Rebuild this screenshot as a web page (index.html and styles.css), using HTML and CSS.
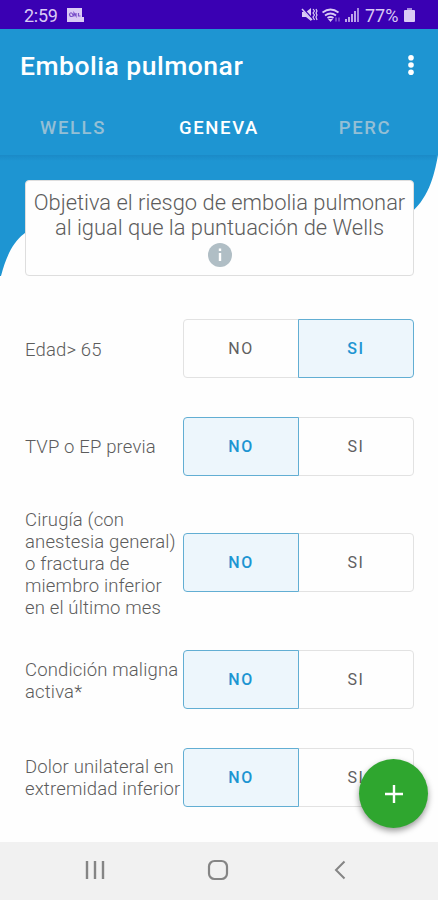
FILE: index.html
```html
<!DOCTYPE html>
<html lang="es">
<head>
    <meta charset="UTF-8">
    <meta name="viewport" content="width=device-width, initial-scale=1.0">
    <title>Embolia pulmonar</title>
    <link rel="stylesheet" href="styles.css">
</head>
<body>
    <div class="status-bar">
        <span class="clock">2:59</span>
        <svg class="notification" width="19" height="15" viewBox="0 0 19 15">
            <path d="M1 0h15v9h2v5H1z" fill="#dacbf5"/>
            <path d="M3.500 6q1.500-2.500 3 0t-1 2.500q-2 0-2-2.500M8 8.500V5l2 3V5M12.500 5v3h2" fill="none" stroke="#7a50c8" stroke-width="1.200"/>
        </svg>
        <div class="status-icons">
            <svg width="17" height="16" viewBox="0 0 17 16">
                <path d="M1 5h4l5-4v13l-5-4H1z" fill="#dacbf5"/>
                <path d="M1 1l12 13" stroke="#3a00b3" stroke-width="2.500"/>
                <path d="M1 2l10 11" stroke="#dacbf5" stroke-width="1.500"/>
                <path d="M12 2l1.500 2-1.500 2 1.500 2-1.500 2 1.500 3M15 2l1 2-1 2 1 2-1 2 1 3" fill="none" stroke="#dacbf5" stroke-width="1.200"/>
            </svg>
            <svg width="19" height="15" viewBox="0 0 19 15">
                <path d="M.5 4.500q8-6 16 0M3 7.500q5.500-4 11 0M5.500 10q3-2 6 0" fill="none" stroke="#dacbf5" stroke-width="1.800"/>
                <path d="M6 11h5l-2.500 3z" fill="#dacbf5"/>
                <path d="M14 13.500v-4M17 9.500v4" stroke="#9470d8" stroke-width="1.200"/>
            </svg>
            <svg width="14" height="14" viewBox="0 0 14 14">
                <path d="M0 11h2v3H0zM3 9h2v5H3zM6 6h2v8H6zM9 3h2v11H9z" fill="#bda6e9"/>
                <path d="M12 0h2v14h-2z" fill="#a588e0"/>
            </svg>
            <span class="battery-text">77%</span>
            <svg width="11" height="14" viewBox="0 0 11 14">
                <path d="M3 0h5v2H3z" fill="#a588e0"/>
                <path d="M1 2h9q1 0 1 1v10q0 1-1 1H1q-1 0-1-1V3q0-1 1-1z" fill="#dacbf5"/>
            </svg>
        </div>
    </div>

    <header class="app-bar">
        <div class="title-row">
            <h1>Embolia pulmonar</h1>
            <svg width="6" height="22" viewBox="0 0 6 22" fill="#fff">
                <circle cx="3" cy="3.700" r="2.800"/>
                <circle cx="3" cy="11" r="2.800"/>
                <circle cx="3" cy="18.300" r="2.800"/>
            </svg>
        </div>
        <nav class="tabs">
            <a class="tab">WELLS</a>
            <a class="tab active">GENEVA</a>
            <a class="tab">PERC</a>
        </nav>
    </header>

    <main class="content">
        <svg class="wave" width="438" height="122" viewBox="0 0 438 122">
            <path d="M0 0H438C434 22 428 45 408 60Q400 66 390 67H52C20 73 9 91 1 121H0z" fill="#1e95d2"/>
        </svg>
        <section class="info-card">
            <p>Objetiva el riesgo de embolia pulmonar<br>al igual que la puntuación de Wells</p>
            <svg width="26" height="26" viewBox="0 0 26 26">
                <circle cx="13" cy="13" r="12" fill="#b0bec5"/>
                <path d="M11.800 6.500h2.400v2.500h-2.400zM11.800 11h2.400v8h-2.400z" fill="#fff"/>
            </svg>
        </section>

        <div class="question">
            <p>Edad&gt; 65</p>
            <div class="toggle"><button>NO</button><button class="selected">SI</button></div>
        </div>
        <div class="question">
            <p>TVP o EP previa</p>
            <div class="toggle"><button class="selected">NO</button><button>SI</button></div>
        </div>
        <div class="question tall">
            <p>Cirugía (con<br>anestesia general)<br>o fractura de<br>miembro inferior<br>en el último mes</p>
            <div class="toggle"><button class="selected">NO</button><button>SI</button></div>
        </div>
        <div class="question">
            <p>Condición maligna<br>activa*</p>
            <div class="toggle"><button class="selected">NO</button><button>SI</button></div>
        </div>
        <div class="question">
            <p>Dolor unilateral en<br>extremidad inferior</p>
            <div class="toggle"><button class="selected">NO</button><button>SI</button></div>
        </div>
    </main>

    <button class="fab" aria-label="Añadir">
        <svg width="20" height="20" viewBox="0 0 20 20">
            <path d="M10 1v18M1 10h18" stroke="#fff" stroke-width="2.400"/>
        </svg>
    </button>

    <footer class="nav-bar">
        <svg width="20" height="20" viewBox="0 0 20 20">
            <path d="M2 1v18M10 1v18M18 1v18" stroke="#858585" stroke-width="2.400"/>
        </svg>
        <svg width="22" height="22" viewBox="0 0 22 22">
            <rect x="2" y="2" width="18" height="18" rx="5.500" fill="none" stroke="#858585" stroke-width="2.200"/>
        </svg>
        <svg width="12" height="20" viewBox="0 0 12 20">
            <path d="M10.500 1.500L2 10l8.500 8.500" fill="none" stroke="#858585" stroke-width="2"/>
        </svg>
    </footer>
</body>
</html>
```
FILE: styles.css
```css
* {
    box-sizing: border-box;
}
body {
    position: relative;
    display: flex;
    flex-direction: column;
    height: 900px;
    margin: 0;
    overflow: hidden;
    background-color: #fefefe;
    font-family: Roboto, sans-serif;
    color: #707070;
}
svg {
    display: block;
    flex-shrink: 0;
}
h1, p {
    margin: 0;
}
button {
    padding: 0;
    font-family: inherit;
    cursor: pointer;
}
.status-bar {
    display: flex;
    flex-shrink: 0;
    align-items: center;
    height: 29px;
    padding: 1px 23px 0 24px;
    background-color: #3a00b3;
    color: #dacbf5;
    font-size: 18px;
}
.clock {
    width: 42px;
    letter-spacing: -0.3px;
}
.status-icons {
    display: flex;
    align-items: center;
    gap: 4px;
    margin-left: auto;
}
.battery-text {
    width: 35px;
    margin: 0 0 0 2px;
    letter-spacing: 0;
}
.app-bar {
    flex-shrink: 0;
    height: 126px;
    background-color: #1e95d2;
    color: #fff;
}
.title-row {
    display: flex;
    align-items: center;
    justify-content: space-between;
    height: 72px;
    padding: 0 24px 0 20px;
}
h1 {
    font-size: 26.500px;
    font-weight: 500;
    letter-spacing: 0.500px;
}
.tabs {
    display: grid;
    grid-template-columns: repeat(3, 1fr);
    height: 54px;
}
.tab {
    padding-top: 16px;
    color: #94bfd5;
    font-size: 18.500px;
    font-weight: 500;
    line-height: 22px;
    letter-spacing: 1.600px;
    text-align: center;
}
.tab.active {
    color: #fff;
}
.content {
    position: relative;
    flex: 1;
    min-height: 0;
    padding: 25px 24px 0 25px;
}
/* shadow cast by the app bar */
.content::before {
    content: "";
    position: absolute;
    top: 0;
    left: 0;
    z-index: 1;
    width: 436px;
    height: 6px;
    background: linear-gradient(rgba(0, 60, 120, 0.12), rgba(0, 60, 120, 0));
}
.wave {
    position: absolute;
    top: 0;
    left: 0;
}
.info-card {
    position: relative;
    display: flex;
    flex-direction: column;
    align-items: center;
    height: 96px;
    margin-bottom: 43px;
    padding-top: 9px;
    border: 1px solid #dedede;
    border-radius: 4px;
    background-color: #fefefe;
    color: #5c5c5c;
    font-size: 21.900px;
    font-weight: 300;
    line-height: 25px;
    text-align: center;
    white-space: nowrap;
}
.info-card svg {
    margin-top: 2px;
}
.question {
    display: flex;
    align-items: center;
    height: 59px;
    margin-bottom: 38.500px;
    color: #5c5c5c;
    font-size: 18.500px;
    font-weight: 300;
    line-height: 22px;
    white-space: nowrap;
}
.question p {
    width: 158px;
    padding-top: 2px;
    letter-spacing: 0.150px;
}
.question.tall {
    height: 112px;
    margin: -7.500px 0 31.500px;
}
.toggle {
    display: flex;
    width: 231px;
    height: 59px;
}
.toggle button {
    width: 116px;
    border: 1px solid #e2e2e2;
    background-color: #fefefe;
    color: #606060;
    font-size: 16px;
    letter-spacing: 1.600px;
}
.toggle button:first-child {
    border-radius: 4px 0 0 4px;
}
.toggle button:last-child {
    margin-left: -1px;
    border-radius: 0 4px 4px 0;
}
.toggle .selected {
    z-index: 1;
    border-color: #62aed3;
    background-color: #edf6fc;
    color: #1e95d2;
    font-weight: 500;
}
.fab {
    position: absolute;
    right: 10px;
    bottom: 72px;
    z-index: 2;
    display: flex;
    align-items: center;
    justify-content: center;
    width: 69px;
    height: 69px;
    border: none;
    border-radius: 50%;
    background-color: #2fa62f;
    box-shadow: 0 3px 6px rgba(0, 0, 0, 0.4);
}
.nav-bar {
    display: grid;
    flex-shrink: 0;
    grid-template-columns: 190px 55px 190px;
    align-items: center;
    justify-items: center;
    height: 58px;
    padding-bottom: 2px;
    background-color: #f1f1f1;
}
```
